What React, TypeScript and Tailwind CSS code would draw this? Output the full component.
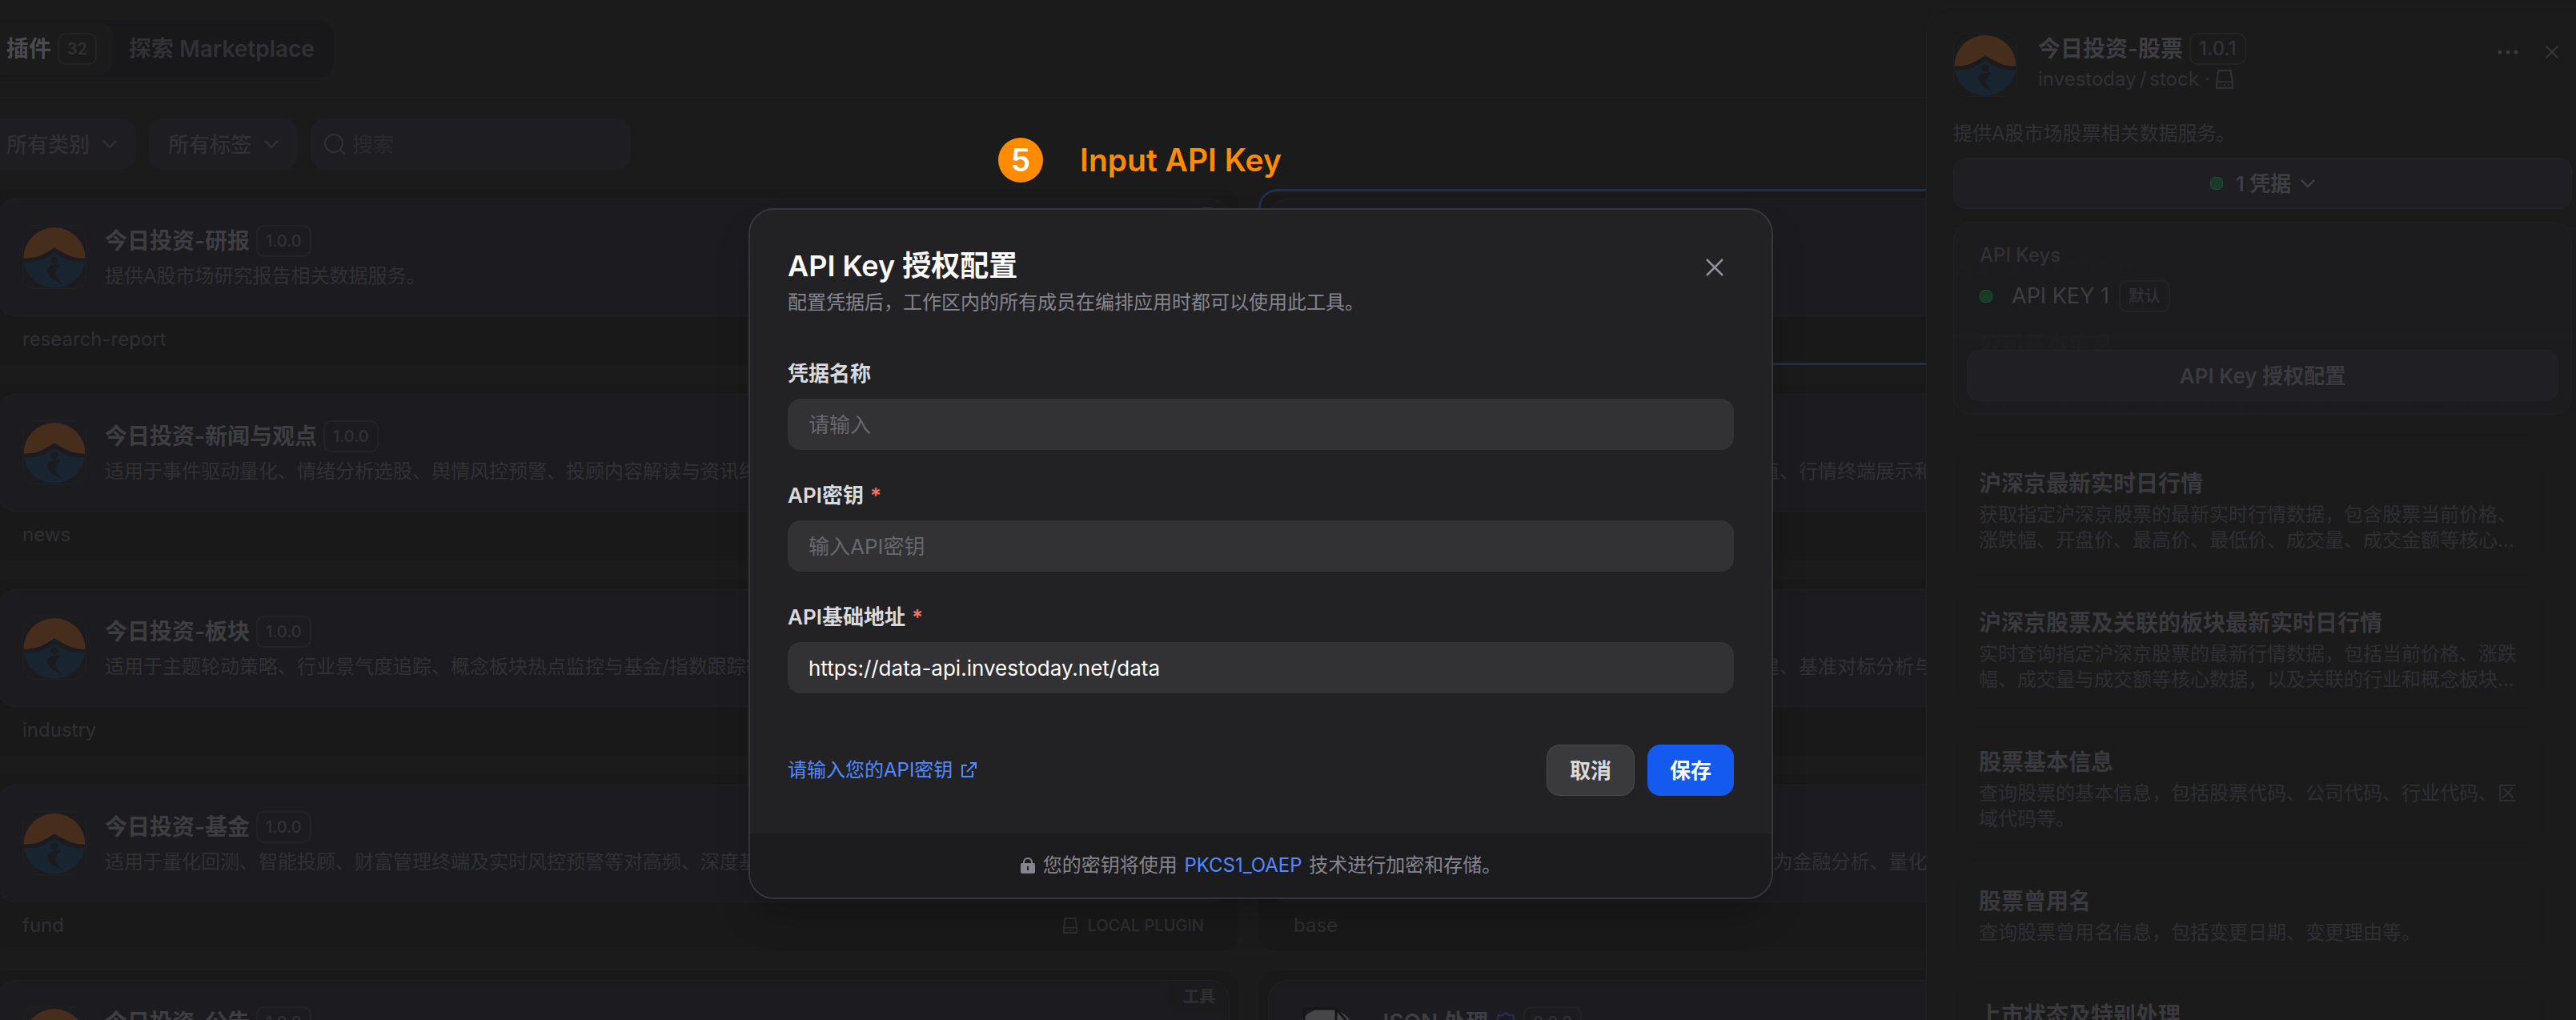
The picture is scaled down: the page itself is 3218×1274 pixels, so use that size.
import { ReactNode } from "react"

const FONT = "font-['Inter','Noto_Sans_CJK_SC',sans-serif]"

interface Plugin {
  title: string
  version: string
  desc: string
  name: string
  json?: boolean
  selected?: boolean
}

const plugins: Plugin[] = [
  { title: "今日投资-研报", version: "1.0.0", desc: "提供A股市场研究报告相关数据服务。", name: "research-report" },
  { title: "今日投资-股票", version: "1.0.1", desc: "提供A股市场股票相关数据服务。", name: "stock", selected: true },
  { title: "今日投资-新闻与观点", version: "1.0.0", desc: "适用于事件驱动量化、情绪分析选股、舆情风控预警、投顾内容解读与资讯终端等场景。", name: "news" },
  { title: "今日投资-行情", version: "1.0.0", desc: "适用于量化交易策略、多因子选股、市场与估值、行情终端展示和实时监控等场景。", name: "quote" },
  { title: "今日投资-板块", version: "1.0.0", desc: "适用于主题轮动策略、行业景气度追踪、概念板块热点监控与基金/指数跟踪等场景。", name: "industry" },
  { title: "今日投资-指数", version: "1.0.0", desc: "适用于指数投资、多元资产配置、投资组合构建、基准对标分析与风险管理等场景。", name: "index" },
  { title: "今日投资-基金", version: "1.0.0", desc: "适用于量化回测、智能投顾、财富管理终端及实时风控预警等对高频、深度基金数据的需求。", name: "fund" },
  { title: "今日投资-基础", version: "1.0.0", desc: "提供A股市场基础数据、交易日历与证券代码，为金融分析、量化研究提供支持。", name: "base" },
  { title: "今日投资-公告", version: "1.0.0", desc: "提供A股市场公告相关数据服务。", name: "announcement" },
  { title: "JSON 处理", version: "0.0.2", desc: "一个用于处理 JSON 的工具。", name: "json_process", json: true },
]

const actions = [
  { title: "公司基本信息", desc: "获取公司的基本信息和工商资料，包括公司代码、中文名称、英文名称、注册地址、法人代表等公司基础信息，以及主营业务。" },
  { title: "沪深京最新实时日行情", desc: "获取指定沪深京股票的最新实时行情数据，包含股票当前价格、涨跌幅、开盘价、最高价、最低价、成交量、成交金额等核心指标信息。" },
  { title: "沪深京股票及关联的板块最新实时日行情", desc: "实时查询指定沪深京股票的最新行情数据，包括当前价格、涨跌幅、成交量与成交额等核心数据，以及关联的行业和概念板块行情信息。" },
  { title: "股票基本信息", desc: "查询股票的基本信息，包括股票代码、公司代码、行业代码、区域代码等。" },
  { title: "股票曾用名", desc: "查询股票曾用名信息，包括变更日期、变更理由等。" },
  { title: "上市状态及特别处理", desc: "查询股票上市状态及特别处理信息。" },
]

function Logo() {
  return (
    <svg viewBox="0 0 80 80" className="size-20 shrink-0 rounded-2xl border border-[#202023]">
      <path d="M.5 41.500a39.500 39.500 0 0 1 79 0c-17 1-25-5-39.500-13.500C26 37 17 42.500.5 41.500Z" fill="#472d1c" />
      <path d="M1 46.500c17 1 26-4 39-12 13 8 22 13 39 12A39.500 39.500 0 0 1 1 46.500Z" fill="#182530" />
      <circle cx="40" cy="44" r="4.700" fill="#1b1b1e" />
      <path d="M48.500 49.500c-8 0-14 1-17 5-3 6 5 14 19.500 20.500-9-8-15-15-2.500-25.500Z" fill="#1b1b1e" />
    </svg>
  )
}

function JsonLogo() {
  return (
    <svg viewBox="0 0 80 80" className="size-20 shrink-0">
      <circle cx="40" cy="40" r="38" fill="#464648" />
      <path d="M13 62V3h40l19 22v37" fill="none" stroke="#161618" strokeWidth="3" />
      <path d="M53 3v22h19" fill="none" stroke="#161618" strokeWidth="3" />
    </svg>
  )
}

function Chevron() {
  return (
    <svg viewBox="0 0 18 11" className="h-[11px] w-[18px]" fill="none" stroke="currentColor" strokeWidth="2.500">
      <path d="m1 1 8 8 8-8" />
    </svg>
  )
}

function Cross({ className }: { className: string }) {
  return (
    <svg viewBox="0 0 22 22" className={className} fill="none" stroke="currentColor" strokeWidth="2.500">
      <path d="m1 1 20 20M21 1 1 21" />
    </svg>
  )
}

function Drive({ className }: { className: string }) {
  return (
    <svg viewBox="0 0 20 22" className={className} fill="none" stroke="currentColor" strokeWidth="2">
      <path d="M3 1h14l2 13v7H1v-7L3 1ZM1 14h18" />
      <path d="M9 17.500h2M13.500 17.500h2" />
    </svg>
  )
}

function Badge({ children }: { children: ReactNode }) {
  return (
    <span className="inline-flex h-10 items-center rounded-[10px] border-2 border-[#232326] px-2.5 text-xl font-medium text-[#323236]">
      {children}
    </span>
  )
}

function PluginCard({ plugin }: { plugin: Plugin }) {
  return (
    <article className={`h-[220px] min-w-0 rounded-3xl border-3 p-[9px] bg-[#19191a] ${plugin.selected ? "border-[#222d4a]" : "border-[#19191a]"}`}>
      <div className="relative h-[147px] overflow-hidden rounded-3xl border border-[#212124] bg-[#1c1b1f] px-[31px] pt-8">
        <span className="absolute top-0 right-0 flex h-10 w-[74px] items-center justify-center rounded-bl-2xl bg-[#1b1b1d] text-xl font-semibold text-[#2e2e31]">工具</span>
        <div className="flex gap-[23px]">
          {plugin.json ? <JsonLogo /> : <Logo />}
          <div className="min-w-0 flex-1">
            <div className="flex h-10 items-center gap-2">
              <h3 className="text-[28px] leading-10 font-semibold text-[#3e3e42]">{plugin.title}</h3>
              {plugin.json && (
                <svg viewBox="0 0 28 28" className="size-7" fill="none" stroke="#222f52" strokeWidth="2.500">
                  <path d="m14 2 4 3h5l1 5 3 4-3 4-1 5h-5l-4 3-4-3H5l-1-5-3-4 3-4 1-5h5l4-3Z" />
                  <path d="m9 14 4 4 7-8" />
                </svg>
              )}
              <Badge>{plugin.version}</Badge>
            </div>
            <p className="mt-2 truncate text-2xl text-[#313135]">{plugin.desc}</p>
          </div>
        </div>
      </div>
      <div className="flex h-[58px] items-center justify-between pr-8 pl-8 text-[#2f2f33]">
        <span className="text-2xl">{plugin.name}</span>
        <span className="flex items-center gap-3 text-xl font-medium">
          <Drive className="h-5 w-[18px]" />
          LOCAL PLUGIN
        </span>
      </div>
    </article>
  )
}

function PluginPage() {
  return (
    <main className="-ml-4 pr-[82px]">
      <div className="flex h-[123px] items-center border-b border-[#1f1f20]">
        <div className="flex h-[72px] items-center rounded-[20px] bg-[#18181b] p-1">
          <button className="flex h-16 items-center gap-2 rounded-2xl bg-[#1b1b1c] pr-5 pl-5 text-[28px] font-semibold text-[#4a4a4d]">
            插件 <Badge>32</Badge>
          </button>
          <button className="h-16 px-5 text-[28px] font-semibold text-[#313135]">探索 Marketplace</button>
        </div>
      </div>
      <div className="flex gap-4 pt-[25px] pb-6 text-[26px] font-medium text-[#313135]">
        <button className="flex h-16 items-center gap-4 rounded-[18px] bg-[#1e1d21] pr-6 pl-6">
          所有类别 <Chevron />
        </button>
        <button className="flex h-16 items-center gap-4 rounded-[18px] bg-[#1e1d21] px-6">
          所有标签 <Chevron />
        </button>
        <label className="flex h-16 w-[400px] items-center gap-2 rounded-[18px] bg-[#1e1d21] px-4">
          <svg viewBox="0 0 28 28" className="size-7 shrink-0" fill="none" stroke="currentColor" strokeWidth="2">
            <circle cx="13" cy="13" r="11" />
            <path d="m21 21 6 6" />
          </svg>
          <input type="search" aria-label="搜索" placeholder="搜索" className="w-full min-w-0 bg-transparent font-normal outline-none placeholder:text-[#2a2a2d]" />
        </label>
      </div>
      <div className="grid grid-cols-2 gap-6">
        {plugins.map((plugin) => (
          <PluginCard key={plugin.name} plugin={plugin} />
        ))}
      </div>
    </main>
  )
}

function DetailDrawer() {
  return (
    <aside className="absolute top-2 right-0 h-full w-[812px] overflow-hidden rounded-tl-[32px] border-t border-l border-[#202022] bg-[#1b1b1c] pl-[33px]">
      <header className="flex gap-[26px] pt-8 pr-[22px]">
        <Logo />
        <div className="flex-1">
          <div className="flex h-10 items-center gap-2">
            <h2 className="text-[28px] leading-10 font-semibold text-[#3e3e42]">今日投资-股票</h2>
            <span className="inline-flex h-10 items-center rounded-[10px] border-2 border-[#232326] px-2.5 text-2xl font-medium text-[#323236]">1.0.1</span>
          </div>
          <div className="flex h-9 items-center text-2xl text-[#313135]">
            <span>investoday</span>
            <span className="mx-1">/</span>
            <span>stock</span>
            <span className="mx-[7px]">·</span>
            <Drive className="h-6 w-[22px]" />
          </div>
        </div>
        <div className="flex h-12 items-center gap-[34px] text-[#3b3b3f]">
          <button aria-label="更多">
            <svg viewBox="0 0 26 6" className="h-1.5 w-[26px]" fill="currentColor">
              <circle cx="3" cy="3" r="2.500" />
              <circle cx="13" cy="3" r="2.500" />
              <circle cx="23" cy="3" r="2.500" />
            </svg>
          </button>
          <button aria-label="关闭详情">
            <Cross className="size-4" />
          </button>
        </div>
      </header>
      <p className="mt-[30px] text-2xl leading-8 text-[#313135]">提供A股市场股票相关数据服务。</p>
      <div className="relative mt-[14px] mr-[5px]">
        <button className="flex h-16 w-full items-center justify-center gap-3 rounded-2xl border border-[#232326] bg-[#1f1e22] text-[26px] font-semibold text-[#3e3e42]">
          <span className="mr-1 size-4 rounded-md border border-[#204a35] bg-[#1a3a2b]" />
          1 凭据
          <Chevron />
        </button>
        <div className="absolute top-20 right-0 left-0 rounded-3xl border border-[#212124] bg-[#1c1b1f]/95">
          <div className="h-[142px] px-8 pt-[25px]">
            <h4 className="text-2xl leading-8 font-medium text-[#313135]">API Keys</h4>
            <div className="mt-[15px] flex h-10 items-center text-[27px] text-[#3e3e42]">
              <span className="mr-6 size-4 rounded-md border border-[#204a35] bg-[#1a3a2b]" />
              <span className="mr-3">API KEY 1</span>
              <Badge>默认</Badge>
            </div>
          </div>
          <div className="border-t border-[#1f1f22] px-4 pt-4 pb-4">
            <button className="h-16 w-full rounded-2xl border border-[#232326] bg-[#201f23] text-[26px] font-semibold text-[#3b3b3f]">API Key 授权配置</button>
          </div>
        </div>
      </div>
      <section className="mt-6 border-t border-[#1e1e1f] pr-[35px]">
        <h4 className="py-8 text-2xl leading-8 font-medium text-[#29292b]">包含 58 个 ACTIONS</h4>
        <ul className="flex flex-col gap-4">
          {actions.map((action) => (
            <li key={action.title} className="rounded-3xl border border-[#1d1d1e] px-[31px] pt-6 pb-[22px]">
              <h5 className="text-[28px] leading-[46px] font-semibold text-[#3a3a3e]">{action.title}</h5>
              <p className="line-clamp-2 text-2xl leading-8 text-[#2f2f33]">{action.desc}</p>
            </li>
          ))}
        </ul>
      </section>
    </aside>
  )
}

interface FieldProps {
  id: string
  label: string
  required?: boolean
  placeholder?: string
  value?: string
}

function Field({ id, label, required, placeholder, value }: FieldProps) {
  return (
    <div className="mb-6">
      <label htmlFor={id} className="flex h-16 items-center text-[26px] font-semibold text-[#d9d9de]">
        {label}
        {required && <span className="ml-2 text-[#f97066]">*</span>}
      </label>
      <input
        id={id}
        type="text"
        placeholder={placeholder}
        defaultValue={value}
        className="h-16 w-full rounded-2xl bg-[#323234] px-[26px] text-[26px] text-[#fbfbfc] outline-none placeholder:text-[#67676e]"
      />
    </div>
  )
}

function ApiKeyModal() {
  return (
    <div className="absolute inset-0 flex items-start justify-center pt-[260px] pr-[68px]">
      <div role="dialog" aria-labelledby="modal-title" className="w-[1280px] overflow-hidden rounded-[32px] border-2 border-[#37373b] bg-[#222224] shadow-2xl">
        <div className="px-[47px] pt-[42px] pb-[47px]">
          <div className="flex items-start justify-between">
            <div>
              <h1 id="modal-title" className="text-4xl leading-14 font-semibold text-[#fbfbfc]">API Key 授权配置</h1>
              <p className="text-2xl leading-9 text-[#85858f]">配置凭据后，工作区内的所有成员在编排应用时都可以使用此工具。</p>
            </div>
            <button aria-label="关闭" className="mt-[19px] mr-[13px] text-[#8f8f99]">
              <Cross className="size-[22px]" />
            </button>
          </div>
          <form className="mt-[38px]">
            <Field id="credential-name" label="凭据名称" placeholder="请输入" />
            <Field id="api-key" label="API密钥" placeholder="输入API密钥" required />
            <Field id="base-url" label="API基础地址" value="https://data-api.investoday.net/data" required />
            <div className="mt-16 flex items-center justify-between">
              <a href="#" className="flex items-center gap-2.5 text-2xl text-[#5289ff]">
                请输入您的API密钥
                <svg viewBox="0 0 20 20" className="size-5" fill="none" stroke="currentColor" strokeWidth="2">
                  <path d="M8 4H2v14h13v-7M12 1h7v7M19 1 8 12" />
                </svg>
              </a>
              <div className="flex gap-4">
                <button type="button" className="h-16 rounded-2xl border border-[#4a4a4e] bg-[#3a3a3d] px-7 text-[26px] font-semibold text-[#d9d9de]">取消</button>
                <button type="submit" className="h-16 rounded-2xl bg-[#155aef] px-7 text-[26px] font-semibold text-white">保存</button>
              </div>
            </div>
          </form>
        </div>
        <div className="flex h-20 items-center justify-center gap-2.5 bg-[#1c1c1e] text-2xl text-[#85858f]">
          <svg viewBox="0 0 18 20" className="h-5 w-[18px]" fill="currentColor">
            <path fillRule="evenodd" d="M3 7V6a6 6 0 0 1 12 0v1h1a2 2 0 0 1 2 2v9a2 2 0 0 1-2 2H2a2 2 0 0 1-2-2V9a2 2 0 0 1 2-2h1Zm2 0h8V6a4 4 0 0 0-8 0v1Zm3 4v5h2v-5H8Z" />
          </svg>
          <span>
            您的密钥将使用 <a href="#" className="mx-0.5 text-[#5289ff]">PKCS1_OAEP</a> 技术进行加密和存储。
          </span>
        </div>
      </div>
    </div>
  )
}

export default function App() {
  return (
    <div className={`relative h-screen overflow-hidden bg-[#1b1b1c] ${FONT}`}>
      <PluginPage />
      <DetailDrawer />
      <ApiKeyModal />
      <div className="absolute top-[172px] right-0 left-0 flex items-center justify-center gap-[46px] pr-[370px] text-[39px] leading-14 font-semibold text-[#ff8c00]">
        <span className="flex size-14 items-center justify-center rounded-full bg-[#ff8c00] text-white">5</span>
        Input API Key
      </div>
    </div>
  )
}
